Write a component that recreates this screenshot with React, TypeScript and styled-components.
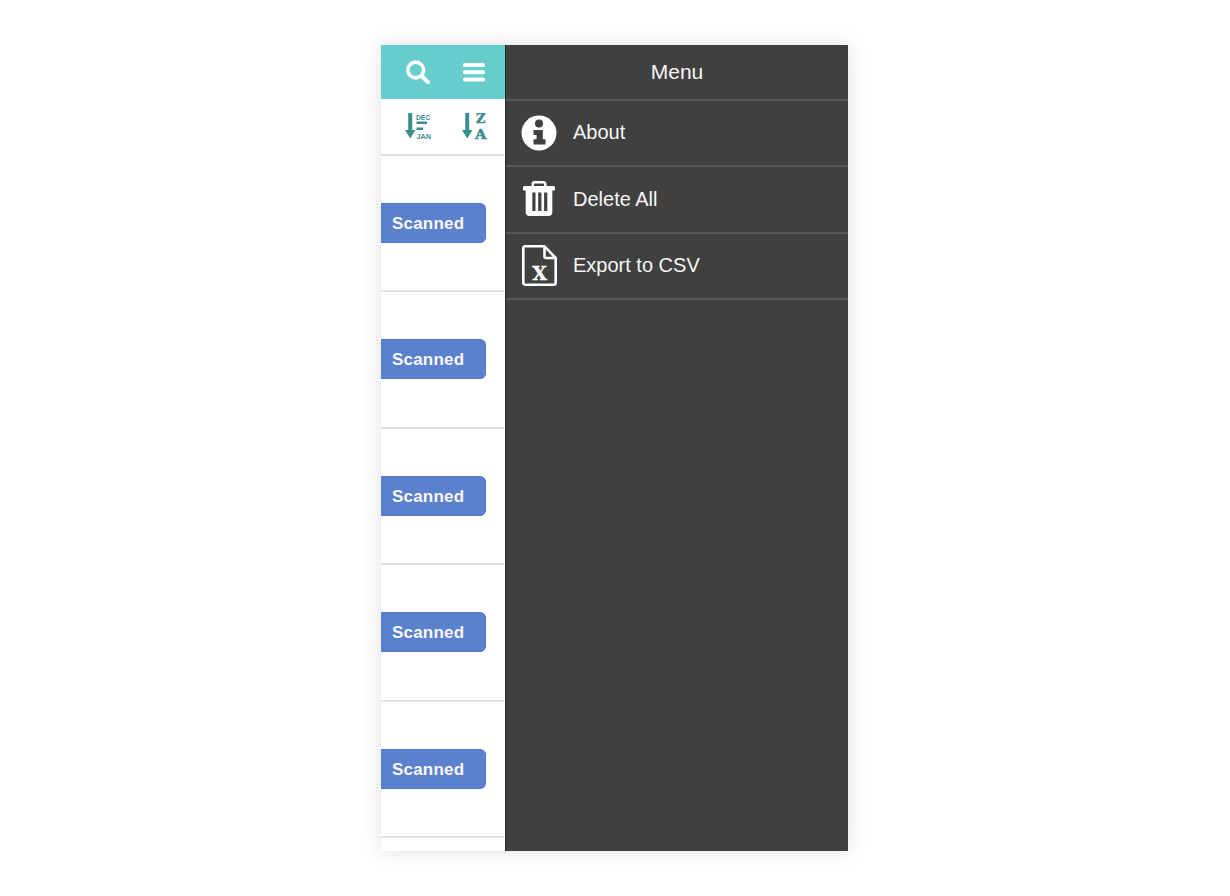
import styled, { createGlobalStyle } from 'styled-components';

const GlobalStyle = createGlobalStyle`
  html, body {
    margin: 0;
    padding: 0;
    background: #fff;
    font-family: "Liberation Sans", Arial, sans-serif;
  }
`;

const Page = styled.div`
  width: 1230px;
  height: 896px;
  padding-top: 45px;
  padding-left: 381px;
  box-sizing: border-box;
  overflow: hidden;
`;
const Phone = styled.div`
  width: 467px;
  height: 806px;
  display: flex;
  box-shadow: 0 0 20px rgba(0, 0, 0, 0.13);
  background: #fff;
`;
const ListPane = styled.div`
  width: 124px;
  flex: none;
  display: flex;
  flex-direction: column;
  overflow: hidden;
`;
const TopBar = styled.div`
  height: 54px;
  flex: none;
  background: #66cccc;
  display: flex;
  align-items: center;
  justify-content: space-between;
  padding: 0 20px 0 25px;
`;
const SortBar = styled.div`
  height: 54.5px;
  flex: none;
  display: flex;
  align-items: center;
  justify-content: space-between;
  padding: 0 16px 0 24px;
  border-bottom: 2px solid #dedede;
  margin-right: 1px;
`;
const Row = styled.div`
  height: 134.5px;
  flex: none;
  display: flex;
  align-items: center;
  border-bottom: 2px solid #e2e2e2;
  margin-right: 1px;
`;
const ScannedTag = styled.div`
  width: 105px;
  height: 40px;
  box-sizing: border-box;
  background: #5b80cd;
  border: 1px solid #4f78c8;
  border-left: none;
  border-radius: 0 6px 6px 0;
  color: #f8f8f8;
  font-size: 17px;
  font-weight: 700;
  letter-spacing: 0.2px;
  line-height: 40px;
  padding-left: 11px;
`;
const MenuPane = styled.div`
  flex: 1;
  background: #404040;
  border-left: 1px solid #2a2a2a;
  display: flex;
  flex-direction: column;
  color: #f6f6f6;
`;
const MenuTitle = styled.div`
  height: 53.5px;
  flex: none;
  border-bottom: 2px solid #585858;
  display: flex;
  align-items: center;
  justify-content: center;
  font-size: 21px;
`;
const MenuItem = styled.div`
  height: 64.5px;
  flex: none;
  border-bottom: 2px solid #585858;
  display: flex;
  align-items: center;
  padding-left: 15px;
  gap: 16px;
  font-size: 20px;
`;
const IconSlot = styled.div`
  width: 36px;
  height: 42px;
  flex: none;
  display: flex;
  align-items: center;
  justify-content: center;
`;

const SearchIcon = () => (
  <svg width="24" height="24" viewBox="0 0 24 24" fill="none" stroke="#fff">
    <circle cx="9.7" cy="10" r="7.9" strokeWidth="3.6" />
    <path d="M15.5 15.8L22 22.2" strokeWidth="4" strokeLinecap="round" />
  </svg>
);

const BarsIcon = () => (
  <svg width="22" height="19" viewBox="0 0 22 19" fill="#fff">
    <rect x="0" y="0" width="22" height="4" rx="1.5" />
    <rect x="0" y="7.2" width="22" height="4" rx="1.5" />
    <rect x="0" y="14.5" width="22" height="4" rx="1.5" />
  </svg>
);

const SortArrow = () => <path d="M3.2 0H7.2V17H10.5L5.2 25.5L0 17H3.2Z" />;

const DateSortIcon = () => (
  <svg width="27" height="27" viewBox="0 0 27 27" fill="#3b8e8e">
    <SortArrow />
    <text x="11" y="6.5" fontSize="8" fontWeight="700" textLength="14" lengthAdjust="spacingAndGlyphs" fontFamily="Liberation Sans, sans-serif">DEC</text>
    <rect x="11.5" y="8.5" width="10.5" height="2.5" />
    <rect x="11.5" y="14.5" width="6.5" height="2.5" />
    <text x="11.5" y="25.5" fontSize="8" fontWeight="700" textLength="14.5" lengthAdjust="spacingAndGlyphs" fontFamily="Liberation Sans, sans-serif">JAN</text>
  </svg>
);

const AlphaSortIcon = () => (
  <svg width="26" height="27" viewBox="0 0 26 27" fill="#3b8e8e" stroke="#3b8e8e" strokeWidth="0">
    <SortArrow />
    <text x="14" y="10" fontSize="12" fontWeight="700" strokeWidth="0.5" fontFamily="DejaVu Serif, serif" textLength="9.5" lengthAdjust="spacingAndGlyphs">Z</text>
    <text x="13" y="25.5" fontSize="12.5" fontWeight="700" strokeWidth="0.5" fontFamily="DejaVu Serif, serif" textLength="11.5" lengthAdjust="spacingAndGlyphs">A</text>
  </svg>
);

const InfoIcon = () => (
  <svg width="36" height="36" viewBox="0 0 36 36">
    <circle cx="18" cy="18" r="17.5" fill="#fff" />
    <circle cx="18" cy="8.6" r="4" fill="#404040" />
    <path d="M12.5 15H21.8V24.3H24.5V29.5H12.5V24.3H15.5V20H12.5Z" fill="#404040" />
  </svg>
);

const TrashIcon = () => (
  <svg width="32" height="36" viewBox="0 0 32 36" fill="#fff">
    <path d="M9.7 6V3.5C9.7 2 10.8 1.2 12 1.2H20C21.2 1.2 22.3 2 22.3 3.5V6" fill="none" stroke="#fff" strokeWidth="2.5" />
    <path d="M1.5 5H30.5C31.3 5 32 5.7 32 6.5V9.5H0V6.5C0 5.7 .7 5 1.5 5Z" />
    <path d="M2.7 9H29.3V31.5C29.3 33.5 27.8 35 26 35H6C4.2 35 2.7 33.5 2.7 31.5Z" />
    <g fill="#404040">
      <rect x="9.3" y="11.5" width="3.2" height="18.5" />
      <rect x="15.2" y="11.5" width="3.2" height="18.5" />
      <rect x="21.1" y="11.5" width="3.2" height="18.5" />
    </g>
  </svg>
);

const CsvFileIcon = () => (
  <svg width="35" height="41" viewBox="0 0 35 41">
    <path d="M3 1.3H22.5L33.7 13V37.5C33.7 38.8 32.8 39.7 31.5 39.7H3C1.9 39.7 1.3 38.8 1.3 37.5V3C1.3 2 1.9 1.3 3 1.3Z" fill="none" stroke="#fff" strokeWidth="2.6" strokeLinejoin="round" />
    <path d="M22.5 1.3V11.5C22.5 12.4 23 13 24 13H33.7" fill="none" stroke="#fff" strokeWidth="2.6" />
    <text x="17.5" y="34.5" textAnchor="middle" fontSize="19" fontWeight="700" fill="#fff" stroke="#fff" strokeWidth="0.3" fontFamily="DejaVu Serif, serif">X</text>
  </svg>
);

const menuItems = [
  { label: 'About', icon: <InfoIcon /> },
  { label: 'Delete All', icon: <TrashIcon /> },
  { label: 'Export to CSV', icon: <CsvFileIcon /> },
];

const rows = [1, 2, 3, 4, 5];

function App() {
  return (
    <Page>
      <GlobalStyle />
      <Phone>
        <ListPane>
          <TopBar>
            <SearchIcon />
            <BarsIcon />
          </TopBar>
          <SortBar>
            <DateSortIcon />
            <AlphaSortIcon />
          </SortBar>
          {rows.map((row) => (
            <Row key={row}>
              <ScannedTag>Scanned</ScannedTag>
            </Row>
          ))}
        </ListPane>
        <MenuPane>
          <MenuTitle>Menu</MenuTitle>
          {menuItems.map((item) => (
            <MenuItem key={item.label}>
              <IconSlot>{item.icon}</IconSlot>
              {item.label}
            </MenuItem>
          ))}
        </MenuPane>
      </Phone>
    </Page>
  );
}

export default App;
